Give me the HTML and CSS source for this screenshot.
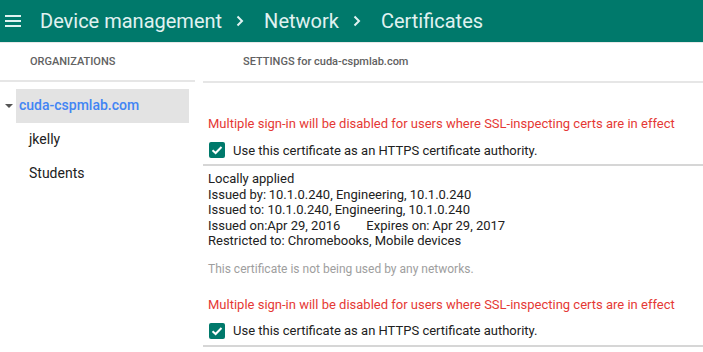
FILE: index.html
```html
<!DOCTYPE html>
<html lang="en">
<head>
    <meta charset="UTF-8">
    <title>Certificates</title>
    <link rel="stylesheet" href="styles.css">
</head>
<body>
    <div class="topbar">
        <div class="menu"><span></span><span></span><span></span></div>
        <span class="crumb">Device management</span>
        <svg class="chev" viewBox="0 0 8 12" width="8" height="12"><path d="M1.5 1.5 L6 6 L1.5 10.5" fill="none" stroke="currentColor" stroke-width="2"/></svg>
        <span class="crumb">Network</span>
        <svg class="chev" viewBox="0 0 8 12" width="8" height="12"><path d="M1.5 1.5 L6 6 L1.5 10.5" fill="none" stroke="currentColor" stroke-width="2"/></svg>
        <span class="crumb">Certificates</span>
    </div>
    <div class="page">
        <div class="sidebar">
            <div class="side-head">ORGANIZATIONS</div>
            <div class="tree">
                <div class="org selected"><span class="caret"></span>cuda-cspmlab.com</div>
                <div class="org child">jkelly</div>
                <div class="org child">Students</div>
            </div>
        </div>
        <div class="main">
            <div class="main-head">SETTINGS for cuda-cspmlab.com</div>
            <div class="cert first">
                <div class="warn">Multiple sign-in will be disabled for users where SSL-inspecting certs are in effect</div>
                <label class="check"><span class="box"><svg viewBox="0 0 16 16" width="16" height="16"><path d="M3.5 8.2 L6.6 11 L12.5 5" fill="none" stroke="#fff" stroke-width="2"/></svg></span>Use this certificate as an HTTPS certificate authority.</label>
            </div>
            <div class="details">
                <div>Locally applied</div>
                <div>Issued by:&thinsp;10.1.0.240, Engineering, 10.1.0.240</div>
                <div>Issued to: 10.1.0.240, Engineering, 10.1.0.240</div>
                <div>Issued on:Apr 29, 2016<span class="exp">Expires on:&thinsp;Apr 29, 2017</span></div>
                <div>Restricted to: Chromebooks, Mobile devices</div>
                <div class="unused">This certificate is not being used by any networks.</div>
            </div>
            <div class="cert">
                <div class="warn">Multiple sign-in will be disabled for users where SSL-inspecting certs are in effect</div>
                <label class="check"><span class="box"><svg viewBox="0 0 16 16" width="16" height="16"><path d="M3.5 8.2 L6.6 11 L12.5 5" fill="none" stroke="#fff" stroke-width="2"/></svg></span>Use this certificate as an HTTPS certificate authority.</label>
            </div>
        </div>
    </div>
</body>
</html>
```

FILE: styles.css
```css
body {
    margin: 0;
    font-family: Roboto, "Liberation Sans", sans-serif;
    background: #fff;
    color: #212121;
}
.topbar {
    display: flex;
    align-items: center;
    height: 42px;
    background-color: #00796b;
    color: #e0f2f1;
    border-bottom: 1px solid #e8e8e8;
}
.menu {
    display: flex;
    flex-direction: column;
    gap: 3px;
    width: 16px;
    margin: 0 19px 0 5px;
}
.menu span {
    height: 2px;
    background: #e0f2f1;
}
.crumb {
    font-size: 20px;
    line-height: 30px;
}
.chev {
    margin: 0 20px 0 14px;
}
.page {
    display: flex;
    gap: 8px;
}
.sidebar {
    width: 195px;
}
.side-head, .main-head {
    height: 37px;
    line-height: 37px;
    font-size: 11px;
    font-weight: 500;
    color: #616161;
    border-bottom: 2px solid #e6e6e6;
}
.side-head {
    padding-left: 30px;
}
.main-head {
    padding-left: 40px;
    height: 38px;
    line-height: 38px;
}
.tree {
    padding: 7px 6px 0 16px;
}
.org {
    height: 34px;
    line-height: 33px;
    font-size: 14px;
    color: #212121;
}
.org.selected {
    position: relative;
    background: #e3e3e3;
    color: #4285f4;
    font-weight: 500;
    padding-left: 3px;
}
.caret {
    position: absolute;
    left: -11px;
    top: 15px;
    border-left: 4px solid transparent;
    border-right: 4px solid transparent;
    border-top: 4px solid #555;
}
.org.child {
    padding-left: 13px;
}
.main {
    flex: 1;
}
.cert {
    padding-left: 5px;
    border-bottom: 2px solid #d6d6d6;
}
.cert.first {
    padding-top: 33px;
}
.warn {
    font-size: 13px;
    line-height: 16px;
    color: #e53935;
}
.check {
    display: flex;
    align-items: center;
    gap: 8px;
    height: 28px;
    margin-top: 4px;
    font-size: 13px;
    color: #212121;
}
.box {
    display: flex;
    width: 16px;
    height: 16px;
    margin-left: 1px;
    background: #00796b;
    border-radius: 2px;
}
.details {
    padding: 5px 0 19px 5px;
    font-size: 13px;
    line-height: 15.6px;
}
.exp {
    margin-left: 26px;
}
.unused {
    margin-top: 13px;
    font-size: 12px;
    color: #9e9e9e;
}
```
